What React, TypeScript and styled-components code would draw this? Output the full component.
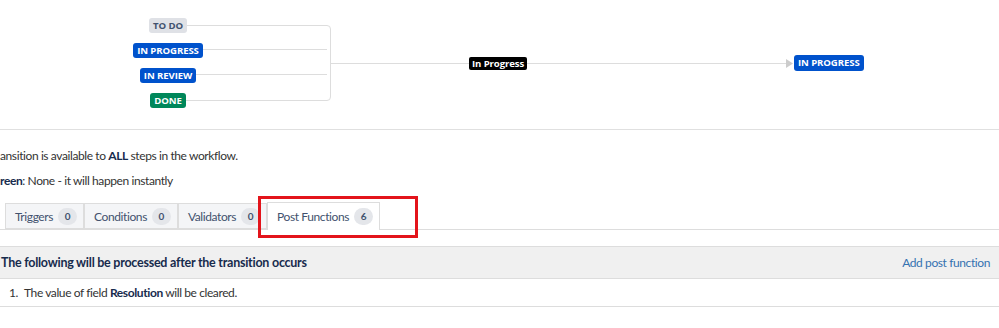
import styled, { createGlobalStyle } from "styled-components";

const GlobalStyle = createGlobalStyle`
  html, body {
    margin: 0;
    padding: 0;
    background: #fff;
  }
  body {
    width: 999px;
    height: 328px;
    overflow: hidden;
    font-family: Lato, "Open Sans", sans-serif;
    font-size: 12px;
    letter-spacing: -0.4px;
    color: #333;
  }
`;

type LozengeKind = "todo" | "progress" | "done";

const lozengeColors: Record<LozengeKind, { bg: string; fg: string }> = {
  todo: { bg: "#dfe1e6", fg: "#42526e" },
  progress: { bg: "#0052cc", fg: "#ffffff" },
  done: { bg: "#00875a", fg: "#ffffff" },
};

// source steps, with the x where their connector starts
const sourceSteps: { label: string; kind: LozengeKind; top: number; right: number }[] = [
  { label: "TO DO", kind: "todo", top: 18, right: 186 },
  { label: "IN PROGRESS", kind: "progress", top: 42, right: 201 },
  { label: "IN REVIEW", kind: "progress", top: 67, right: 195 },
  { label: "DONE", kind: "done", top: 93, right: 186 },
];

const tabs = [
  { name: "Triggers", count: 0 },
  { name: "Conditions", count: 0 },
  { name: "Validators", count: 0 },
  { name: "Post Functions", count: 6, active: true },
];

export default function App() {
  return (
    <Page>
      <GlobalStyle />
      <Diagram>
        <Connectors width="999" height="129">
          {sourceSteps.map((s) => (
            <line
              key={s.label}
              x1={s.right}
              x2="327"
              y1={s.top + 7.5}
              y2={s.top + 7.5}
              stroke="#dddddd"
            />
          ))}
          <path
            d="M327 25.5 Q330.5 25.5 330.5 29 L330.5 97 Q330.5 100.5 327 100.5"
            fill="none"
            stroke="#dddddd"
          />
          <line x1="330" x2="787" y1="63.5" y2="63.5" stroke="#dddddd" />
          <polygon points="786,59 793,63.5 786,68" fill="#cccccc" />
        </Connectors>
        <StepColumn>
          {sourceSteps.map((s) => (
            <Lozenge key={s.label} $kind={s.kind}>
              {s.label}
            </Lozenge>
          ))}
        </StepColumn>
        <TransitionLabel>In Progress</TransitionLabel>
        <TargetLozenge $kind="progress">IN PROGRESS</TargetLozenge>
      </Diagram>

      <Details>
        <Line>
          ansition is available to <Strong>ALL</Strong> steps in the workflow.
        </Line>
        <Line>
          <Strong>reen</Strong>: None - it will happen instantly
        </Line>
      </Details>

      <TabBar>
        {tabs.map((t) => (
          <Tab key={t.name} $active={!!t.active}>
            {t.name}
            <Count>{t.count}</Count>
          </Tab>
        ))}
        <Highlight />
      </TabBar>

      <Table>
        <HeaderRow>
          <HeaderText>The following will be processed after the transition occurs</HeaderText>
          <AddLink href="#">Add post function</AddLink>
        </HeaderRow>
        <BodyRow>
          <Num>1.</Num>
          <span>
            The value of field <Strong>Resolution</Strong> will be cleared.
          </span>
        </BodyRow>
      </Table>
    </Page>
  );
}

const Page = styled.div`
  width: 999px;
  height: 328px;
  overflow: hidden;
`;

const Diagram = styled.div`
  position: relative;
  height: 129px;
  border-bottom: 1px solid #e0e0e0;
`;

const Connectors = styled.svg`
  position: absolute;
  left: 0;
  top: 0;
`;

const StepColumn = styled.div`
  position: absolute;
  left: 118px;
  top: 18px;
  width: 100px;
  display: flex;
  flex-direction: column;
  align-items: center;
  gap: 10px;
`;

const Lozenge = styled.span<{ $kind: LozengeKind }>`
  display: inline-block;
  height: 15px;
  line-height: 15px;
  padding: 0 4px;
  border-radius: 3px;
  font-family: "Open Sans", sans-serif;
  font-size: 9.6px;
  font-weight: 700;
  letter-spacing: -0.1px;
  white-space: nowrap;
  background: ${(p) => lozengeColors[p.$kind].bg};
  color: ${(p) => lozengeColors[p.$kind].fg};
`;

const TargetLozenge = styled(Lozenge)`
  position: absolute;
  left: 794px;
  top: 55px;
  height: 16px;
  line-height: 16px;
`;

const TransitionLabel = styled.span`
  position: absolute;
  left: 469px;
  top: 57px;
  height: 13px;
  line-height: 13px;
  padding: 0 3px;
  border-radius: 2px;
  background: #000;
  color: #fff;
  font-family: "Open Sans", sans-serif;
  font-size: 9.6px;
  font-weight: 700;
  letter-spacing: -0.1px;
`;

const Details = styled.div`
  display: flex;
  flex-direction: column;
  gap: 8px;
  padding-top: 17px;
`;

const Line = styled.div`
  height: 17px;
  line-height: 17px;
  white-space: nowrap;
`;

const Strong = styled.b`
  color: #172b4d;
  font-weight: 700;
`;

const TabBar = styled.div`
  position: relative;
  display: flex;
  align-items: flex-end;
  height: 28px;
  margin-top: 12px;
  padding-left: 5px;
  border-bottom: 1px solid #dddddd;
`;

const Tab = styled.div<{ $active: boolean }>`
  display: flex;
  align-items: center;
  gap: 5px;
  height: ${(p) => (p.$active ? "27px" : "24px")};
  margin-bottom: ${(p) => (p.$active ? "-1px" : "0")};
  padding: 0 6px 0 9px;
  border: 1px solid #dddddd;
  border-bottom: ${(p) => (p.$active ? "none" : "1px solid #dddddd")};
  background: ${(p) => (p.$active ? "#ffffff" : "#f4f5f7")};
  color: #42526e;
  & + & {
    border-left: ${(p) => (p.$active ? "1px solid #dddddd" : "none")};
  }
`;

const Count = styled.span`
  display: inline-block;
  min-width: 19px;
  height: 17px;
  line-height: 17px;
  border-radius: 9px;
  background: #e4e6ea;
  font-size: 10px;
  font-weight: 700;
  letter-spacing: 0;
  text-align: center;
  color: #42526e;
`;

const Highlight = styled.div`
  position: absolute;
  left: 258px;
  top: -5px;
  width: 154px;
  height: 36px;
  border: 3px solid #e3141b;
  pointer-events: none;
`;

const Table = styled.div`
  margin-top: 16px;
`;

const HeaderRow = styled.div`
  display: flex;
  align-items: center;
  justify-content: space-between;
  height: 31px;
  padding: 0 9px 0 1px;
  background: #f0f0f0;
  border-top: 1px solid #dddddd;
  border-bottom: 1px solid #dddddd;
`;

const HeaderText = styled.span`
  font-size: 12.5px;
  letter-spacing: -0.25px;
  font-weight: 700;
  color: #172b4d;
`;

const AddLink = styled.a`
  color: #3572b0;
  text-decoration: none;
`;

const BodyRow = styled.div`
  display: flex;
  align-items: center;
  height: 27px;
  padding-left: 9px;
  border-bottom: 1px solid #dddddd;
  white-space: nowrap;
`;

const Num = styled.span`
  width: 15px;
`;
